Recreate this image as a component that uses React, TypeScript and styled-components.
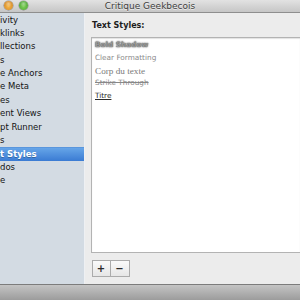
import React from "react";
import styled, { createGlobalStyle, css } from "styled-components";

const Global = createGlobalStyle`
  html, body { margin: 0; padding: 0; background: #ececec; }
  body { width: 300px; height: 300px; overflow: hidden; font-family: "DejaVu Sans", sans-serif; }
`;

const Window = styled.div`
  width: 300px;
  height: 300px;
  display: flex;
  flex-direction: column;
  overflow: hidden;
  background: #ececec;
`;

const TitleBar = styled.div`
  height: 12px;
  flex: none;
  display: grid;
  grid-template-columns: 1fr auto 1fr;
  align-items: center;
  background: linear-gradient(#e2e2e2, #c6c6c6);
  border-bottom: 1px solid #8e8e8e;
`;

const Lights = styled.div`
  display: flex;
  gap: 6px;
  padding-left: 3.5px;
  align-self: start;
  padding-top: 1px;
`;

const Light = styled.span<{ $c: string; $d: string }>`
  width: 9px;
  height: 9px;
  border-radius: 50%;
  background: radial-gradient(circle at 50% 30%, #fff6 0, transparent 45%),
    radial-gradient(circle at 50% 60%, ${(p) => p.$c}, ${(p) => p.$d});
  box-shadow: 0 0 0 0.5px rgba(0, 0, 0, 0.35);
`;

const Title = styled.div`
  font-size: 9px;
  line-height: 12px;
  color: #404040;
  text-shadow: 0 1px 0 rgba(255, 255, 255, 0.6);
  white-space: nowrap;
`;

const Body = styled.div`
  flex: 1;
  display: flex;
  min-height: 0;
`;

const Sidebar = styled.div`
  width: 84px;
  flex: none;
  background: #d3dbe3;
  border-right: 1px solid #eef0f3;
  display: flex;
  flex-direction: column;
  padding-top: 0.5px;
`;

const SideItem = styled.div<{ $selected?: boolean }>`
  height: 13.4px;
  line-height: 13.4px;
  font-size: 8.5px;
  color: #141414;
  white-space: nowrap;
  ${(p) =>
    p.$selected &&
    css`
      color: #fff;
      font-weight: 600;
      background: linear-gradient(#66a5e8, #3a7bd3);
      border-top: 1px solid #5a96dd;
      height: 12.4px;
      line-height: 12.4px;
      text-shadow: 0 1px 0 rgba(0, 0, 0, 0.25);
    `}
`;

const Panel = styled.div`
  flex: 1;
  display: flex;
  flex-direction: column;
  padding: 8px 0 7px 6px;
  background: #ececec;
  min-width: 0;
`;

const Heading = styled.div`
  font-size: 8px;
  font-weight: bold;
  line-height: 10px;
  color: #1e1e1e;
  margin-left: 1px;
`;

const ListBox = styled.div`
  margin-top: 6px;
  flex: 1;
  background: #fff;
  border: 1px solid #b3b3b3;
  border-right: none;
  box-shadow: inset 0 1px 1px rgba(0, 0, 0, 0.12);
  padding: 1px 0 0 3px;
  display: flex;
  flex-direction: column;
`;

const StyleItem = styled.div<{ $kind: string }>`
  height: 12.8px;
  line-height: 12.8px;
  font-size: 7.3px;
  white-space: nowrap;
  color: #8c8c8c;
  ${(p) =>
    p.$kind === "shadow" &&
    css`
      font-weight: bold;
      color: #9a9a9a;
      text-shadow: 0 0 2px #444, 0 0 1px #666;
    `}
  ${(p) =>
    p.$kind === "serif" &&
    css`
      font-family: "Liberation Serif", serif;
      font-size: 9.2px;
      color: #7a7a7a;
    `}
  ${(p) =>
    p.$kind === "strike" &&
    css`
      text-decoration: line-through;
      color: #888;
    `}
  ${(p) =>
    p.$kind === "title" &&
    css`
      text-decoration: underline;
      color: #2a2a2a;
    `}
`;

const ButtonRow = styled.div`
  display: flex;
  margin-top: 7px;
  margin-left: 0.5px;
`;

const SegButton = styled.div`
  width: 17px;
  height: 15px;
  border: 1px solid #ababab;
  background: linear-gradient(#fafafa, #e6e6e6);
  display: flex;
  align-items: center;
  justify-content: center;
  font-size: 10px;
  font-weight: bold;
  color: #2a2a2a;
  & + & {
    border-left: none;
    width: 18px;
  }
`;

const BottomBar = styled.div`
  height: 15px;
  flex: none;
  border-top: 1px solid #7c7c7c;
  background: linear-gradient(#c4c4c4, #9c9c9c);
`;

const sideItems = [
  "ivity",
  "klinks",
  "llections",
  "s",
  "e Anchors",
  "e Meta",
  "es",
  "ent Views",
  "pt Runner",
  "s",
  "t Styles",
  "dos",
  "e",
];

const styles: { label: string; kind: string }[] = [
  { label: "Bold Shadow", kind: "shadow" },
  { label: "Clear Formatting", kind: "plain" },
  { label: "Corp du texte", kind: "serif" },
  { label: "Strike Through", kind: "strike" },
  { label: "Titre", kind: "title" },
];

export default function App() {
  return (
    <>
      <Global />
      <Window>
        <TitleBar>
          <Lights>
            <Light $c="#f6b84a" $d="#c9791a" />
            <Light $c="#7fd05a" $d="#3f9a2a" />
          </Lights>
          <Title>Critique Geekbecois</Title>
          <div />
        </TitleBar>
        <Body>
          <Sidebar>
            {sideItems.map((s, i) => (
              <SideItem key={i} $selected={i === 10}>
                {s}
              </SideItem>
            ))}
          </Sidebar>
          <Panel>
            <Heading>Text Styles:</Heading>
            <ListBox>
              {styles.map((s) => (
                <StyleItem key={s.label} $kind={s.kind}>
                  {s.label}
                </StyleItem>
              ))}
            </ListBox>
            <ButtonRow>
              <SegButton>+</SegButton>
              <SegButton>−</SegButton>
            </ButtonRow>
          </Panel>
        </Body>
        <BottomBar />
      </Window>
    </>
  );
}
